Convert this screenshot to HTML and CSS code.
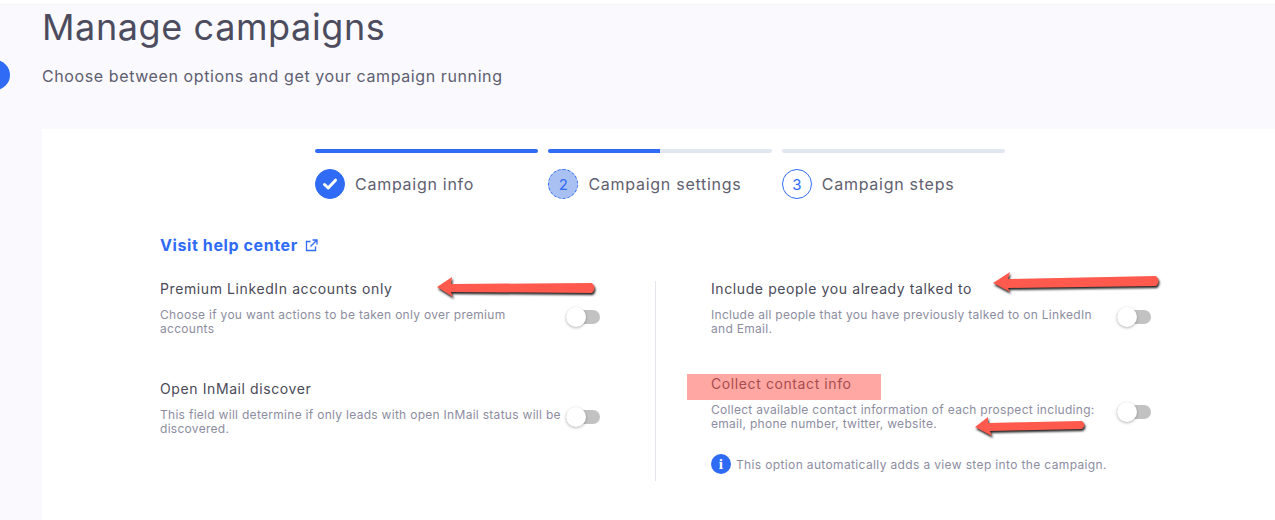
FILE: index.html
```html
<!DOCTYPE html>
<html lang="en">
<head>
    <meta charset="UTF-8">
    <meta name="viewport" content="width=device-width, initial-scale=1.0">
    <title>Manage campaigns</title>
    <link rel="stylesheet" href="styles.css">
</head>
<body>
    <div class="page">
        <span class="side-dot"></span>
        <div class="header">
            <h1>Manage campaigns</h1>
            <p>Choose between options and get your campaign running</p>
        </div>
        <div class="card">
            <div class="stepper">
                <div class="step">
                    <div class="bar"><span class="bar-fill full"></span></div>
                    <div class="step-label">
                        <span class="circle done">
                            <svg width="16" height="14" viewBox="0 0 16 14"><path d="M2.5 7.5 L6.2 11 L13.5 3.2" fill="none" stroke="#fff" stroke-width="3" stroke-linecap="round" stroke-linejoin="round"/></svg>
                        </span>
                        Campaign info
                    </div>
                </div>
                <div class="step">
                    <div class="bar"><span class="bar-fill half"></span></div>
                    <div class="step-label">
                        <span class="circle active">2</span>
                        Campaign settings
                    </div>
                </div>
                <div class="step">
                    <div class="bar"></div>
                    <div class="step-label">
                        <span class="circle">3</span>
                        Campaign steps
                    </div>
                </div>
            </div>

            <a class="help-link" href="#">Visit help center
                <svg width="13" height="13" viewBox="0 0 13 13"><path d="M10.5 7.5 V11.5 H1.5 V2.5 H5.5 M7.5 1 H12 V5.5 M12 1 L5.5 7.5" fill="none" stroke="#2f6bf5" stroke-width="1.3"/></svg>
            </a>

            <div class="settings">
                <div class="col col-left">
                    <div class="setting">
                        <h3>Premium LinkedIn accounts only</h3>
                        <div class="setting-row">
                            <p>Choose if you want actions to be taken only over premium<br>accounts</p>
                            <span class="toggle"></span>
                        </div>
                    </div>
                    <div class="setting">
                        <h3>Open InMail discover</h3>
                        <div class="setting-row">
                            <p>This field will determine if only leads with open InMail status will be discovered.</p>
                            <span class="toggle"></span>
                        </div>
                    </div>
                </div>
                <div class="col col-right">
                    <div class="setting">
                        <h3>Include people you already talked to</h3>
                        <div class="setting-row">
                            <p>Include all people that you have previously talked to on LinkedIn and Email.</p>
                            <span class="toggle"></span>
                        </div>
                    </div>
                    <div class="setting setting-tight">
                        <h3>Collect contact info</h3>
                        <div class="setting-row">
                            <p>Collect available contact information of each prospect including: email, phone number, twitter, website.</p>
                            <span class="toggle"></span>
                        </div>
                        <div class="info-note">
                            <span class="info-icon">i</span>
                            This option automatically adds a view step into the campaign.
                        </div>
                    </div>
                </div>
            </div>
        </div>
    </div>

    <!-- annotations drawn over the screenshot -->
    <div class="highlight"></div>
    <svg class="arrows" width="1275" height="520" viewBox="0 0 1275 520">
        <path d="M437 287 L452 277 L451 284 L592 283 Q597 288 592 293 L451 292 L453 297 Z"/>
        <path d="M993 283 L1010 272 L1008 279 L1156 276 Q1161 281 1156 286 L1008 288 L1010 292 Z"/>
        <path d="M975 427 L988 417 L988 423 L1082 421 Q1087 425 1082 429 L990 431 L992 436 Z"/>
    </svg>
</body>
</html>
```

FILE: styles.css
```css
body {
    font-family: 'Inter', 'Open Sans', sans-serif;
    background-color: #ffffff;
    color: #4c4c5e;
    margin: 0;
    padding: 0;
    overflow: hidden;
}
.page {
    height: 515px;
    margin-top: 4px;
    padding-left: 42px;
    background-color: #f9f9fe;
    border-top: 1px solid #f5f5f9;
    position: relative;
}
.side-dot {
    position: absolute;
    left: -20px;
    top: 55px;
    width: 30px;
    height: 30px;
    border-radius: 50%;
    background-color: #2f6bf5;
}
.header {
    height: 124px;
}
.header h1 {
    margin: 0;
    font-size: 36px;
    line-height: 44px;
    font-weight: 400;
    letter-spacing: 0.6px;
    color: #4c4c5e;
}
.header p {
    margin: 15px 0 0;
    font-size: 16px;
    line-height: 24px;
    letter-spacing: 0.6px;
    color: #5e5e70;
}
.card {
    height: 391px;
    background-color: #ffffff;
    padding: 20px 0 0 118px;
}
.stepper {
    display: flex;
    gap: 10px;
    margin-left: 155px;
}
.step {
    width: 223.4px;
}
.bar {
    height: 4px;
    border-radius: 2px;
    background-color: #e2e6f0;
    overflow: hidden;
}
.bar-fill {
    display: block;
    height: 100%;
    background-color: #2f6bf5;
}
.bar-fill.full {
    width: 100%;
}
.bar-fill.half {
    width: 50%;
}
.step-label {
    display: flex;
    align-items: center;
    gap: 10px;
    margin-top: 16px;
    font-size: 16px;
    letter-spacing: 0.73px;
    color: #5f6070;
}
.circle {
    display: flex;
    align-items: center;
    justify-content: center;
    box-sizing: border-box;
    width: 30px;
    height: 30px;
    border-radius: 50%;
    border: 1px solid #2f6bf5;
    color: #2f6bf5;
    font-size: 15px;
    letter-spacing: 0;
}
.circle.done {
    background-color: #2f6bf5;
}
.circle.active {
    background-color: #a9c0f3;
    border-style: dashed;
}
.help-link {
    display: flex;
    align-items: center;
    gap: 7px;
    margin-top: 34px;
    font-size: 16px;
    line-height: 24px;
    font-weight: 700;
    letter-spacing: 0.6px;
    color: #2f6bf5;
    text-decoration: none;
}
.settings {
    display: flex;
    margin-top: 24px;
}
.col {
    width: 440px;
    height: 200px;
}
.col-left {
    padding-right: 55px;
    border-right: 1px solid #e4e4ea;
}
.col-right {
    margin-left: 55px;
}
.setting {
    height: 100px;
}
.setting-tight {
    margin-top: -5px;
}
.setting h3 {
    margin: 0;
    font-size: 14px;
    line-height: 16px;
    font-weight: 400;
    letter-spacing: 0.6px;
    color: #4a4a58;
}
.setting-row {
    display: flex;
    align-items: flex-start;
    justify-content: space-between;
    margin-top: 11px;
}
.setting-row p {
    margin: 0;
    width: 404px;
    font-size: 12px;
    line-height: 14px;
    letter-spacing: 0.29px;
    color: #8d8d9f;
}
.toggle {
    flex: none;
    position: relative;
    width: 34px;
    height: 14px;
    margin-top: 2px;
    border-radius: 7px;
    background-color: #c2c2c2;
}
.toggle::before {
    content: "";
    position: absolute;
    left: 0;
    top: -3px;
    width: 20px;
    height: 20px;
    border-radius: 50%;
    background-color: #ffffff;
    box-shadow: 0 1px 3px rgba(0, 0, 0, 0.3);
}
.info-note {
    display: flex;
    align-items: center;
    gap: 5px;
    margin-top: 23px;
    font-size: 12px;
    letter-spacing: 0.36px;
    color: #8d8d9f;
}
.info-icon {
    display: flex;
    align-items: center;
    justify-content: center;
    width: 20px;
    height: 20px;
    border-radius: 50%;
    background-color: #2f6bf5;
    color: #ffffff;
    font-family: 'Liberation Serif', serif;
    font-size: 15px;
    font-weight: 700;
}
.highlight {
    position: absolute;
    left: 687px;
    top: 374px;
    width: 194px;
    height: 26px;
    background-color: rgba(255, 80, 70, 0.5);
}
.arrows {
    position: absolute;
    left: 0;
    top: 0;
    filter: drop-shadow(1px 2px 1px #222222);
}
.arrows path {
    fill: #ff5a4d;
}
```
